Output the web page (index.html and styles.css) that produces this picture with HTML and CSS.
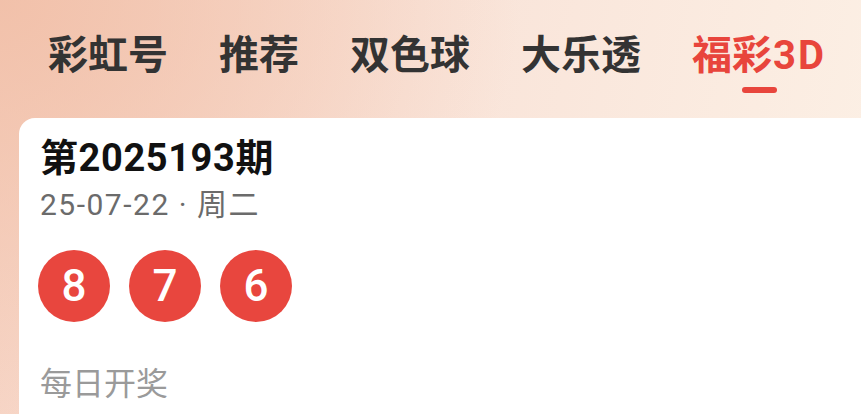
FILE: index.html
```html
<!DOCTYPE html>
<html lang="zh-CN">
<head>
<meta charset="utf-8">
<title>福彩3D</title>
<link rel="stylesheet" href="styles.css">
</head>
<body>
<div class="page">
  <nav class="tabs">
    <div class="tab">彩虹号</div>
    <div class="tab">推荐</div>
    <div class="tab">双色球</div>
    <div class="tab">大乐透</div>
    <div class="tab active">福彩<span class="latin">3D</span><span class="bar"></span></div>
  </nav>
  <section class="card">
    <div class="issue">第2025193期</div>
    <div class="date">25-07-22 · 周二</div>
    <div class="balls">
      <span class="ball">8</span>
      <span class="ball">7</span>
      <span class="ball">6</span>
    </div>
    <div class="note">每日开奖</div>
  </section>
</div>
</body>
</html>
```
FILE: styles.css
```css
html, body {
  margin: 0;
  padding: 0;
}
body {
  width: 861px;
  height: 414px;
  overflow: hidden;
  font-family: Roboto, "Noto Sans CJK SC", sans-serif;
}
.page {
  height: 414px;
  background:
    radial-gradient(ellipse 520px 420px at 0 0, rgba(241, 190, 166, 0.85), rgba(241, 190, 166, 0) 100%),
    linear-gradient(100deg, #f6d2c2 0%, #f9e3d8 45%, #fcf0e5 100%);
  overflow: hidden;
}
.tabs {
  display: flex;
  gap: 51px;
  padding: 28px 0 0 48px;
  height: 90px;
  box-sizing: border-box;
}
.tab {
  position: relative;
  font-size: 40px;
  line-height: 56px;
  font-weight: 700;
  color: #333333;
  white-space: nowrap;
}
.tab.active {
  color: #e8453c;
}
.tab .latin {
  letter-spacing: 2px;
  margin-left: 1px;
}
.tab .bar {
  position: absolute;
  left: 50%;
  top: 59px;
  width: 35px;
  height: 6px;
  margin-left: -17px;
  border-radius: 3px;
  background: #e8453c;
}
.card {
  margin: 28px 0 0 19px;
  width: 880px;
  height: 320px;
  background: #ffffff;
  border-radius: 16px 16px 0 0;
  padding: 17px 0 0 21px;
  box-sizing: border-box;
}
.issue {
  font-size: 38px;
  line-height: 46px;
  font-weight: 700;
  color: #111111;
  letter-spacing: 0.6px;
}
.date {
  margin-top: 4px;
  font-size: 30px;
  line-height: 40px;
  color: #6b6b6b;
  letter-spacing: 1.5px;
}
.date .dot {
  margin: 0 6px;
}
.balls {
  display: flex;
  gap: 19px;
  margin: 25px 0 0 -2px;
}
.ball {
  width: 72px;
  height: 72px;
  border-radius: 50%;
  background: #e8463e;
  color: #ffffff;
  font-size: 44px;
  font-weight: 500;
  display: flex;
  align-items: center;
  justify-content: center;
}
.note {
  margin-top: 42px;
  font-size: 32px;
  line-height: 40px;
  color: #9a9a9a;
}
```
